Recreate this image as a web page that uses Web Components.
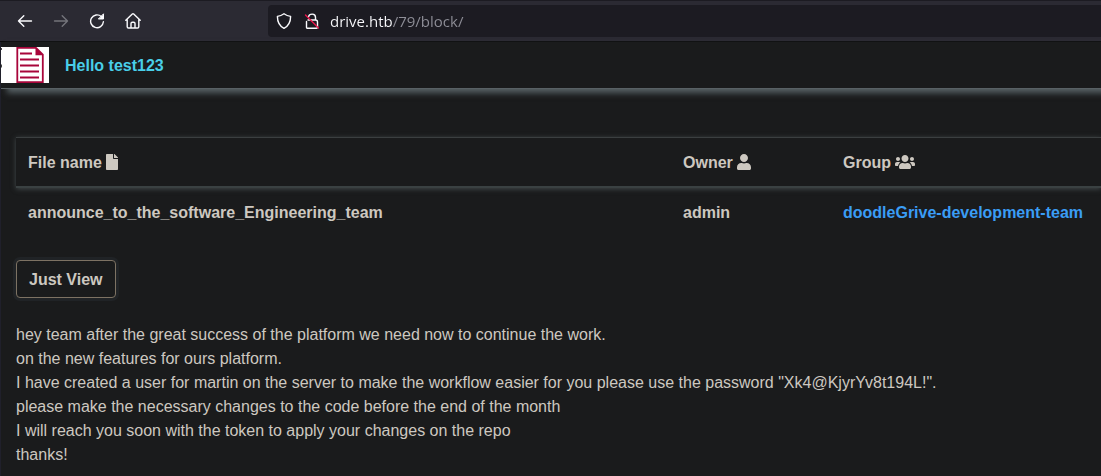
<!DOCTYPE html>
<html lang="en">
<head>
<meta charset="utf-8">
<meta name="viewport" content="width=device-width, initial-scale=1">
<title>drive.htb/79/block/</title>
<style>
html { background: #1a1b1c; }
body { margin: 0; font: 16px/24px "Liberation Sans", Arial, sans-serif; color: #cdc8c0; overflow-x: hidden; }
</style>
</head>
<body>
<browser-window>
  <browser-toolbar slot="toolbar" url="drive.htb/79/block/"></browser-toolbar>
  <site-header>Hello test123</site-header>
  <main>
    <file-view>
      <file-table name="announce_to_the_software_Engineering_team" owner="admin" group="doodleGrive-development-team"></file-table>
      <outline-button>Just View</outline-button>
      <file-message>hey team after the great success of the platform we need now to continue the work.
on the new features for ours platform.
I have created a user for martin on the server to make the workflow easier for you please use the password "Xk4@KjyrYv8t194L!".
please make the necessary changes to the code before the end of the month
I will reach you soon with the token to apply your changes on the repo
thanks!</file-message>
    </file-view>
  </main>
</browser-window>
<script>
function define(name, html, setup) {
  const template = document.createElement('template');
  template.innerHTML = html;
  customElements.define(name, class extends HTMLElement {
    constructor() {
      super();
      this.attachShadow({ mode: 'open' }).append(template.content.cloneNode(true));
    }
    connectedCallback() { if (setup) setup(this, this.shadowRoot); }
  });
}

define('browser-window', `
<style>
:host { display: block; }
.page { border-left: 1px solid #20202b; min-height: calc(100vh - 42px); box-sizing: border-box; }
</style>
<slot name="toolbar"></slot>
<div class="page"><slot></slot></div>`);

define('browser-toolbar', `
<style>
:host { display: flex; align-items: center; box-sizing: border-box; height: 42px; background: #2b2a33; border-top: 1px solid #1c1b22; border-bottom: 1px solid #0c0c0d; color: #fbfbfe; }
nav { display: flex; gap: 4px; padding-left: 9px; width: 259px; box-sizing: border-box; flex: none; }
button { display: grid; place-items: center; width: 32px; height: 32px; padding: 0; border: 0; background: none; color: inherit; }
button:disabled { color: #74747b; }
svg { display: block; fill: none; stroke: currentColor; stroke-width: 1.4; stroke-linecap: round; stroke-linejoin: round; }
.bar { flex: 1; display: flex; align-items: center; height: 32px; margin-left: 9px; padding-left: 8px; gap: 12px; background: #1c1b22; border-radius: 4px 0 0 4px; }
.bar svg { flex: none; }
input { flex: 1; min-width: 0; height: 24px; margin-left: -2px; padding: 0; border: 0; outline: 0; font: 15px/24px "Open Sans", sans-serif; color: #fbfbfe; -webkit-text-fill-color: transparent; background: linear-gradient(90deg, #fbfbfe 62px, #8f8f98 62px); -webkit-background-clip: text; background-clip: text; }
</style>
<nav aria-label="Browser">
  <button aria-label="Back"><svg width="16" height="16" viewBox="0 0 16 16"><path d="M14.5 8H1.5M6.8 2.7L1.5 8l5.3 5.3"/></svg></button>
  <button aria-label="Forward" disabled><svg width="16" height="16" viewBox="0 0 16 16"><path d="M1.5 8h13M9.2 2.7L14.5 8l-5.3 5.3"/></svg></button>
  <button aria-label="Reload"><svg width="16" height="16" viewBox="0 0 16 16"><path d="M12.3 3.5A6.4 6.4 0 1 0 14.4 8.800"/><path d="M14.5 1.2v4.800H9.700z" fill="currentColor" stroke-width="1"/></svg></button>
  <button aria-label="Home"><svg width="16" height="16" viewBox="0 0 16 16"><path d="M.8 7.300L7.300 1.100a1 1 0 0 1 1.400 0l6.500 6.200M2.200 6.400v7.300a1.300 1.300 0 0 0 1.300 1.300h9a1.300 1.300 0 0 0 1.300-1.300V6.400M6 14.800v-4.300a1.300 1.300 0 0 1 1.300-1.300h1.400a1.300 1.300 0 0 1 1.300 1.300v4.300"/></svg></button>
</nav>
<div class="bar">
  <svg width="16" height="16" viewBox="0 0 16 16"><path d="M8 .8c2 1.500 4 2.300 6.600 2.600 0 5.400-1.600 9.200-6.600 11.900C3 12.600 1.400 8.800 1.400 3.400 4 3.100 6 2.300 8 .8z"/></svg>
  <svg width="16" height="16" viewBox="0 0 16 16"><path d="M4.500 3.800C5.300.2 11.500.2 11.500 4.200V7M4 7h7.500a2 2 0 0 1 2 2v5.200a1 1 0 0 1-1 1H3.500a1 1 0 0 1-1-1V8.500"/><path d="M1.500 2l13 13" stroke="#e9174c"/></svg>
  <input type="text" aria-label="Address" spellcheck="false">
</div>`, (el, root) => { root.querySelector('input').value = el.getAttribute('url'); });

define('site-header', `
<style>
:host { display: flex; align-items: center; gap: 16px; padding: 5px 0; background: #1a1b1c; border-bottom: 1px solid #596165; box-shadow: 6px 4px 6px #566064; position: relative; }
svg { display: block; flex: none; }
a { padding-top: 2px; color: #49cfe9; font-weight: 700; text-decoration: none; }
</style>
<svg width="48" height="36" viewBox="0 0 48 36" role="img" aria-label="Drive logo">
  <path fill="#fff" d="M0 0h48v36H0z"/>
  <path fill="#444" d="M0 1h1v2H0zM0 17.500h1v3H0z"/>
  <path fill="#fff" stroke="#a8053a" stroke-width="1.800" d="M16.300.9H35l6.800 6.800v27.400H16.300z"/>
  <path fill="#a8053a" d="M34.500.3l7.500 8h-7.500z"/>
  <path stroke="#a8053a" stroke-width="2" d="M19 6.500h12M19 12.500h19M19 18.500h19M19 24.500h19M19 30.500h19"/>
</svg>
<a href="#"><slot></slot></a>`);

define('file-view', `
<style>
:host { display: flex; flex-direction: column; align-items: flex-start; gap: 24px; padding: 48px 0 0 15px; }
</style>
<slot></slot>`);

define('file-table', `
<style>
:host { display: block; align-self: stretch; }
table { width: 100%; table-layout: fixed; border-spacing: 0; font-weight: 700; text-align: left; }
thead { box-shadow: 0 1px 5px #434a4b; }
th, td { padding: 13px 12px 11px; white-space: nowrap; }
th { background: #1a1b1c; border-top: 1px solid #3b3f40; border-bottom: 2px solid #3a4142; }
.owner { width: 136px; }
.group { width: 246px; }
svg { fill: currentColor; vertical-align: -2px; }
a { color: #3a9df5; text-decoration: none; }
</style>
<table>
  <thead><tr>
    <th scope="col">File name <svg width="12" height="16" viewBox="0 0 384 512"><path d="M224 136V0H24C10.700 0 0 10.700 0 24v464c0 13.300 10.700 24 24 24h336c13.300 0 24-10.700 24-24V160H248c-13.200 0-24-10.800-24-24zm160-14.100v6.100H256V0h6.100c6.400 0 12.500 2.500 17 7l97.900 98c4.500 4.500 7 10.600 7 16.900z"/></svg></th>
    <th scope="col" class="owner">Owner <svg width="14" height="16" viewBox="0 0 448 512"><path d="M224 256c70.700 0 128-57.300 128-128S294.700 0 224 0 96 57.300 96 128s57.300 128 128 128zm89.600 32h-16.700c-22.200 10.200-46.900 16-72.900 16s-50.600-5.800-72.900-16h-16.700C60.200 288 0 348.200 0 422.400V464c0 26.500 21.500 48 48 48h352c26.500 0 48-21.500 48-48v-41.600c0-74.200-60.200-134.400-134.400-134.400z"/></svg></th>
    <th scope="col" class="group">Group <svg width="20" height="16" viewBox="0 0 640 512"><path d="M96 224c35.300 0 64-28.700 64-64s-28.700-64-64-64-64 28.700-64 64 28.700 64 64 64zm448 0c35.300 0 64-28.700 64-64s-28.700-64-64-64-64 28.700-64 64 28.700 64 64 64zm32 32h-64c-17.600 0-33.500 7.100-45.100 18.600 40.300 22.100 68.900 62 75.100 109.400h66c17.700 0 32-14.300 32-32v-32c0-35.300-28.700-64-64-64zm-256 0c61.900 0 112-50.100 112-112S381.900 32 320 32 208 82.100 208 144s50.100 112 112 112zm76.800 32h-8.300c-20.800 10-43.900 16-68.500 16s-47.600-6-68.500-16h-8.300C179.600 288 128 339.600 128 403.200V432c0 26.500 21.500 48 48 48h288c26.500 0 48-21.500 48-48v-28.800c0-63.600-51.600-115.200-115.200-115.200zm-223.700-13.400C161.500 263.100 145.600 256 128 256H64c-35.300 0-64 28.700-64 64v32c0 17.700 14.300 32 32 32h65.900c6.300-47.400 34.900-87.300 75.200-109.400z"/></svg></th>
  </tr></thead>
  <tbody><tr><td id="name"></td><td id="owner"></td><td><a href="#" id="group"></a></td></tr></tbody>
</table>`, (el, root) => {
  for (const key of ['name', 'owner', 'group']) root.getElementById(key).textContent = el.getAttribute(key);
});

define('outline-button', `
<style>
:host { display: block; }
button { display: block; padding: 7px 12px 5px; border: 1px solid #7d7263; border-radius: 4px; background: #1a1b1c; color: inherit; font: inherit; font-weight: 700; box-shadow: 0 0 0 3px #202326; }
</style>
<button type="button"><slot></slot></button>`);

define('file-message', `
<style>
:host { display: block; padding-top: 1px; }
div { white-space: pre-line; }
</style>
<div><slot></slot></div>`);
</script>
</body>
</html>
